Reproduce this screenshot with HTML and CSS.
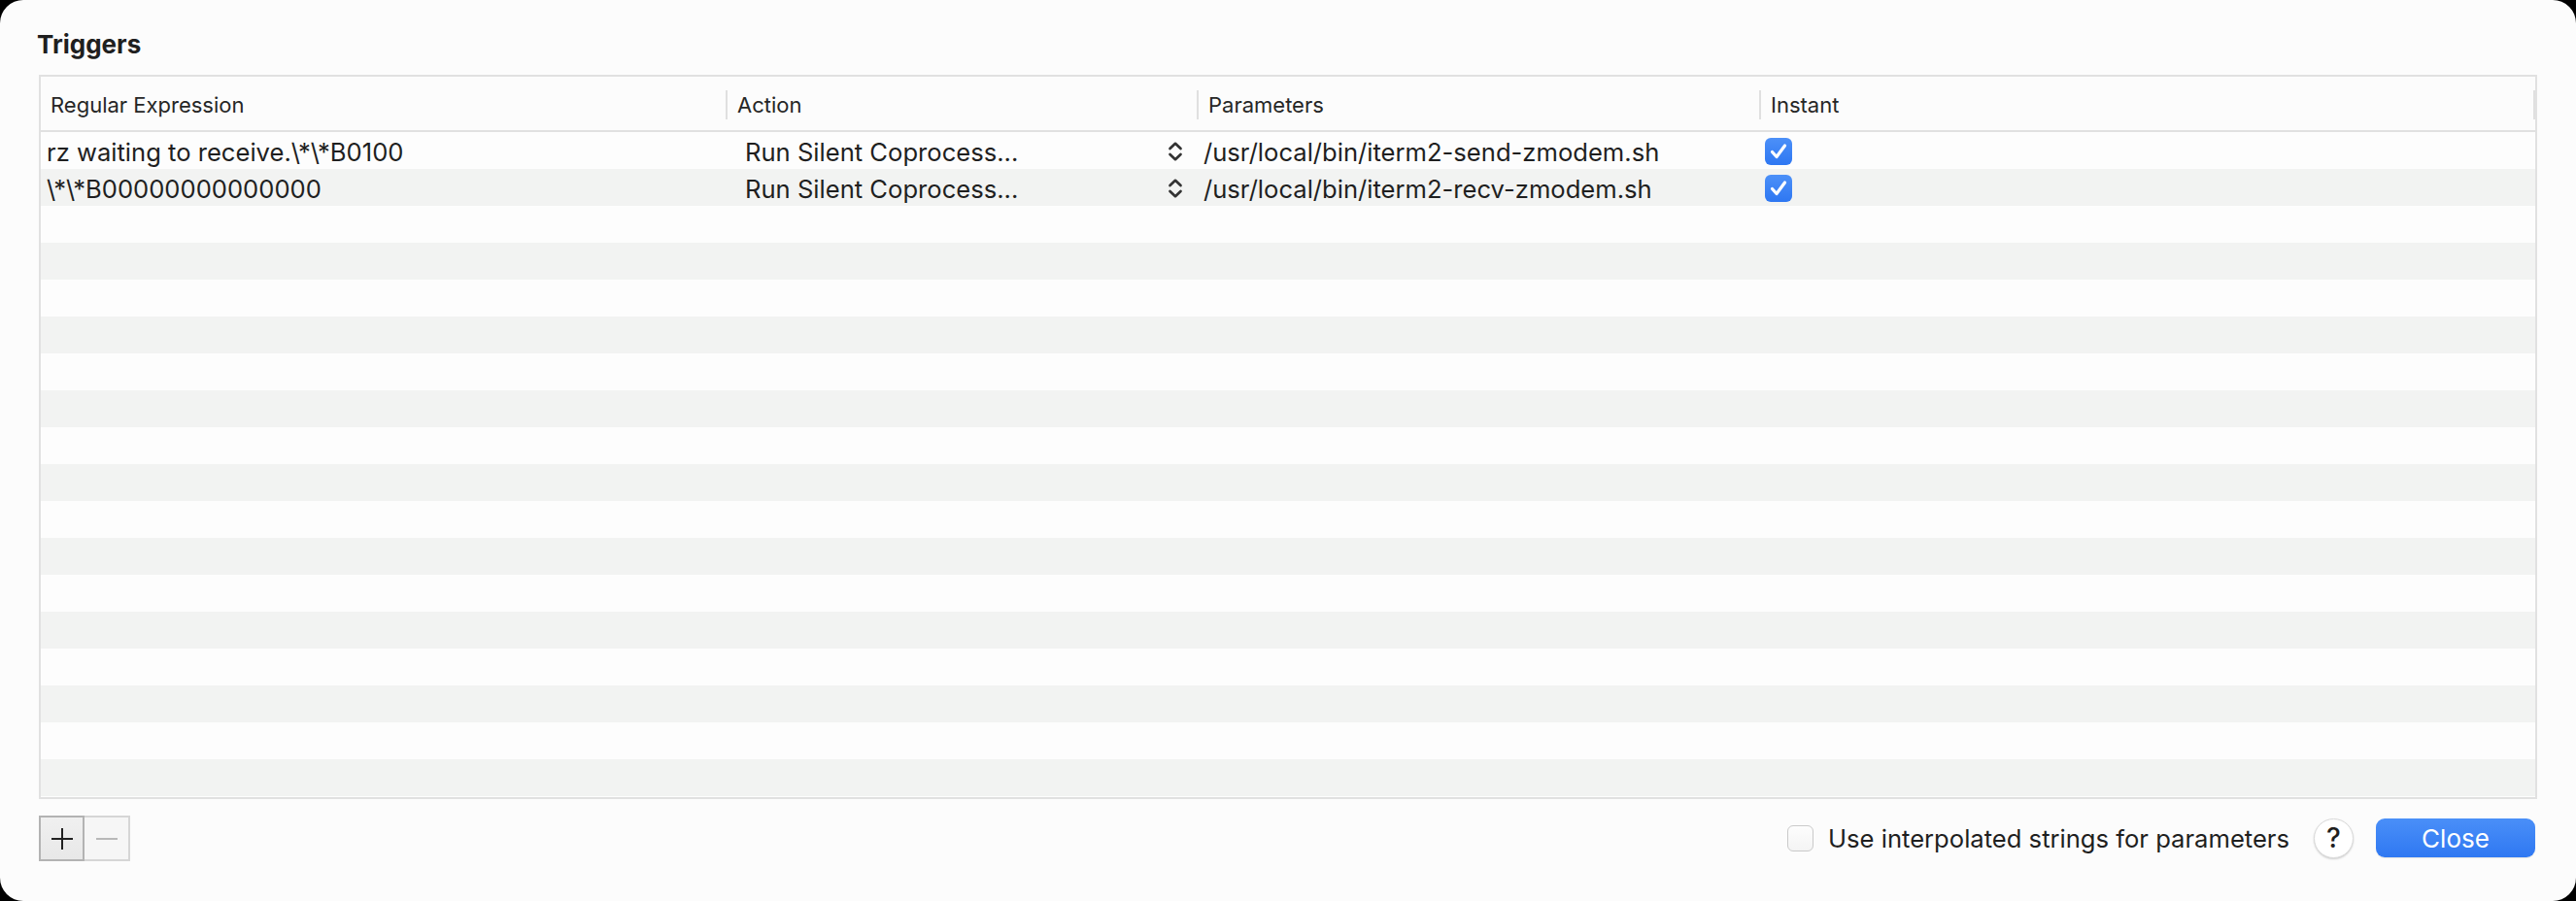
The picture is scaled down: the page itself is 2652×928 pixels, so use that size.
FILE: index.html
```html
<!DOCTYPE html>
<html>
<head>
<meta charset="utf-8">
<link rel="stylesheet" href="styles.css">
</head>
<body>
<div class="window">
  <h1 class="title">Triggers</h1>
  <div class="table">
    <div class="thead">
      <div class="th first">Regular Expression</div>
      <div class="th"><span class="sep"></span>Action</div>
      <div class="th"><span class="sep"></span>Parameters</div>
      <div class="th last"><span class="sep"></span>Instant<span class="fill"></span><span class="sep end"></span></div>
    </div>
    <div class="tbody">
      <div class="row">
        <div class="td regex">rz waiting to receive.\*\*B0100</div>
        <div class="td action"><span class="action-label">Run Silent Coprocess...</span>
          <svg class="stepper" width="16" height="24" viewBox="0 0 16 24"><path d="M2.5 9 L8 3.8 L13.5 9" /><path d="M2.5 15 L8 20.2 L13.5 15" /></svg>
        </div>
        <div class="td param">/usr/local/bin/iterm2-send-zmodem.sh</div>
        <div class="td instant"><span class="check on"><svg width="28" height="28" viewBox="0 0 28 28"><path d="M7.5 14.5 L12 19.5 L20.5 8" /></svg></span></div>
      </div>
      <div class="row">
        <div class="td regex">\*\*B00000000000000</div>
        <div class="td action"><span class="action-label">Run Silent Coprocess...</span>
          <svg class="stepper" width="16" height="24" viewBox="0 0 16 24"><path d="M2.5 9 L8 3.8 L13.5 9" /><path d="M2.5 15 L8 20.2 L13.5 15" /></svg>
        </div>
        <div class="td param">/usr/local/bin/iterm2-recv-zmodem.sh</div>
        <div class="td instant"><span class="check on"><svg width="28" height="28" viewBox="0 0 28 28"><path d="M7.5 14.5 L12 19.5 L20.5 8" /></svg></span></div>
      </div>
      <div class="row"></div><div class="row"></div><div class="row"></div><div class="row"></div>
      <div class="row"></div><div class="row"></div><div class="row"></div><div class="row"></div>
      <div class="row"></div><div class="row"></div><div class="row"></div><div class="row"></div>
      <div class="row"></div><div class="row"></div><div class="row"></div><div class="row"></div>
      <div class="row"></div>
    </div>
  </div>
  <div class="footer">
    <div class="seg">
      <button class="seg-btn plus"><svg width="24" height="24" viewBox="0 0 24 24"><path d="M12 1 V23 M1 12 H23" /></svg></button>
      <button class="seg-btn minus"><svg width="24" height="24" viewBox="0 0 24 24"><path d="M1 12 H23" /></svg></button>
    </div>
    <div class="spacer"></div>
    <label class="opt"><span class="check off"></span>Use interpolated strings for parameters</label>
    <button class="help">?</button>
    <button class="close">Close</button>
  </div>
</div>
</body>
</html>
```
FILE: styles.css
```css
html, body {
  margin: 0;
  padding: 0;
  background: #000;
}
body {
  width: 2652px;
  height: 928px;
  font-family: Inter, "Liberation Sans", sans-serif;
  color: #1f1f1f;
}
.window {
  box-sizing: border-box;
  width: 2652px;
  height: 928px;
  border-radius: 24px;
  background: #fcfcfc;
  padding: 28px 40px 0 40px;
  display: flex;
  flex-direction: column;
}
.title {
  margin: 0 0 0 -2px;
  font-size: 26px;
  font-weight: 700;
  line-height: 36px;
  height: 49px;
  color: #1f1f1f;
}
.table {
  box-sizing: border-box;
  height: 746px;
  border: 2px solid #e1e1e1;
  display: flex;
  flex-direction: column;
  overflow: hidden;
}
.thead, .row {
  display: grid;
  grid-template-columns: 705px 485px 579px 1fr;
}
.thead {
  flex: none;
  height: 55px;
  border-bottom: 2px solid #e1e1e1;
  font-size: 22px;
  color: #262626;
}
.th {
  display: flex;
  align-items: center;
  padding-top: 2px;
}
.th.first { padding-left: 10px; }
.sep {
  width: 2px;
  height: 30px;
  background: #e0e0e0;
  margin-right: 10px;
  flex: none;
}
.fill { flex: 1; }
.sep.end { margin-right: 0; }
.row {
  height: 38px;
  background: #fdfdfd;
  font-size: 25.6px;
}
.row:nth-child(even) {
  background: #f2f3f2;
}
.td {
  display: flex;
  align-items: center;
  white-space: nowrap;
  padding-top: 2px;
}
.regex { padding-left: 6px; }
.action { padding-left: 20px; }
.action-label { flex: 1; }
.stepper {
  fill: none;
  stroke: #333;
  stroke-width: 2.7;
  stroke-linecap: round;
  stroke-linejoin: round;
  margin-right: 14px;
}
.param { padding-left: 7px; }
.instant { padding-left: 6px; }
.check {
  box-sizing: border-box;
  width: 28px;
  height: 28px;
  border-radius: 6px;
  display: inline-flex;
  flex: none;
}
.check.on {
  background: linear-gradient(#4c90f8, #2e77f2);
}
.check.on svg {
  fill: none;
  stroke: #fff;
  stroke-width: 3.2;
  stroke-linecap: round;
  stroke-linejoin: round;
}
.check.off {
  width: 27px;
  height: 27px;
  border: 1.5px solid #cacaca;
  background: linear-gradient(#fdfdfd, #f4f4f4);
  margin-right: 15px;
}
.footer {
  display: flex;
  align-items: center;
  height: 80px;
  padding-right: 2px;
}
.seg {
  display: flex;
  align-self: flex-start;
  margin-top: 17px;
}
.seg-btn {
  box-sizing: border-box;
  width: 47px;
  height: 47px;
  margin: 0;
  padding: 0;
  display: flex;
  align-items: center;
  justify-content: center;
}
.seg-btn svg {
  fill: none;
  stroke-width: 2;
}
.plus {
  border: 2px solid #b3b3b3;
  background: linear-gradient(#f0f0f0, #e8e8e8);
}
.plus svg { stroke: #222; }
.minus {
  border: 2px solid #d6d6d6;
  border-left: none;
  background: #f6f6f6;
}
.minus svg { stroke: #b8b8b8; }
.spacer { flex: 1; }
.opt {
  display: flex;
  align-items: center;
  font-size: 25.6px;
  color: #1f1f1f;
  margin-right: 25px;
}
.help {
  box-sizing: border-box;
  width: 41px;
  height: 41px;
  border-radius: 50%;
  border: 1px solid #dadada;
  background: #fff;
  box-shadow: 0 1px 2px rgba(0,0,0,0.18);
  font-family: Inter, "Liberation Sans", sans-serif;
  font-size: 28px;
  font-weight: 500;
  color: #1f1f1f;
  padding: 0;
  margin-right: 23px;
  display: flex;
  align-items: center;
  justify-content: center;
}
.close {
  box-sizing: border-box;
  width: 164px;
  height: 40px;
  border: none;
  border-radius: 9px;
  background: linear-gradient(#4a8ff8, #2f78f2);
  box-shadow: 0 1px 1px rgba(0,0,0,0.1);
  color: #fff;
  font-family: Inter, "Liberation Sans", sans-serif;
  font-size: 26px;
  padding: 0;
}
```
